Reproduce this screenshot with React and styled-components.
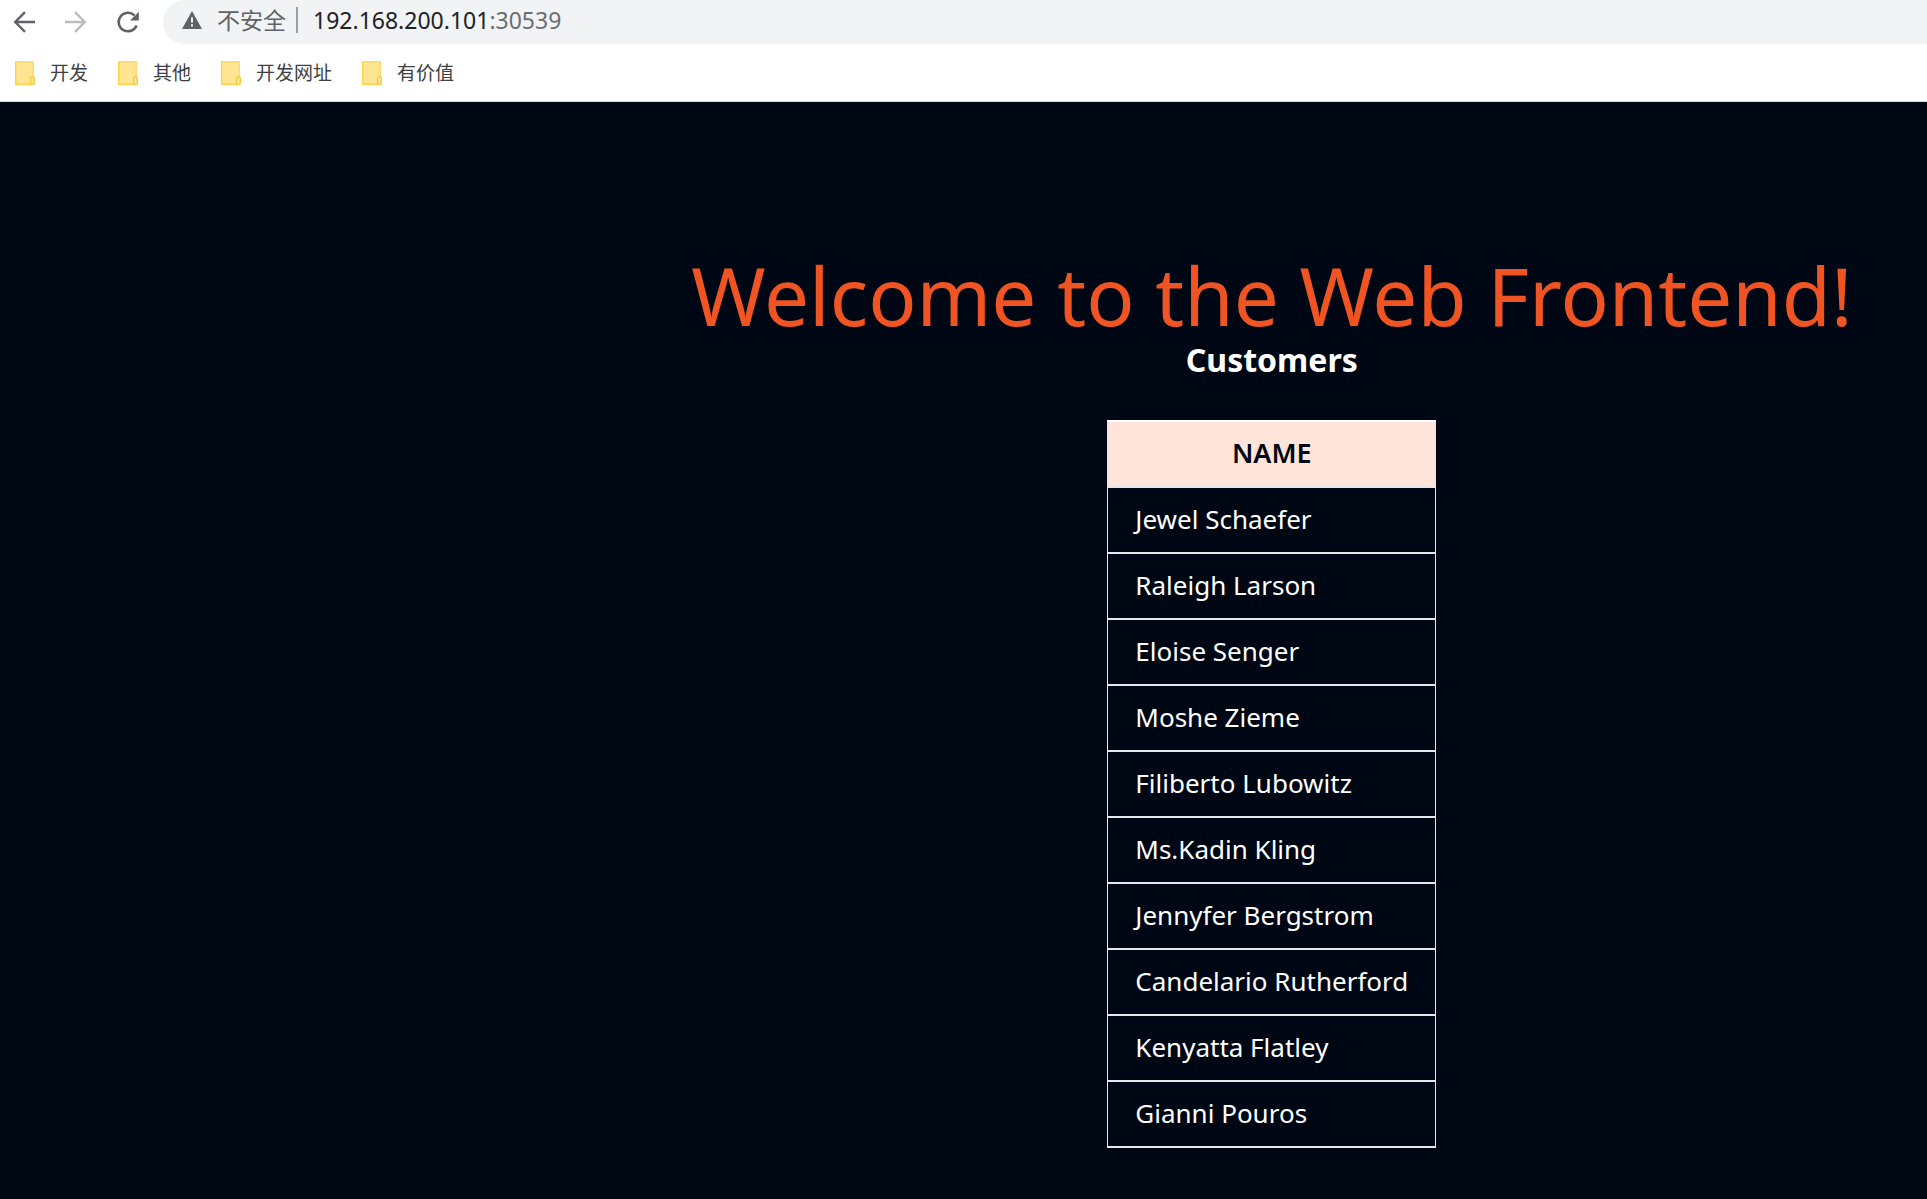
import React from "react";
import styled, { createGlobalStyle } from "styled-components";

const GlobalStyle = createGlobalStyle`
  * { box-sizing: border-box; }
  body {
    margin: 0;
    background: #000714;
    font-family: "Noto Sans", "Noto Sans CJK SC", sans-serif;
  }
  button { border: 0; padding: 0; background: none; font: inherit; color: inherit; cursor: pointer; }
`;

const Page = styled.div`
  display: flex;
  flex-direction: column;
  min-height: 100vh;
`;

const Browser = styled.header`
  background: #fff;
  border-bottom: 1px solid #dadce0;
`;

const Toolbar = styled.div`
  display: flex;
  align-items: center;
  height: 44px;
  padding-left: 12px;
`;

const NavButtons = styled.div`
  display: flex;
  gap: 28px;
  height: 40px;
  margin-right: 23px;
`;

const NavButton = styled.button`
  display: flex;
  align-items: center;
  color: ${(p) => (p.disabled ? "#babcbe" : "#5f6368")};
`;

const AddressBar = styled.div`
  display: flex;
  align-items: center;
  flex: 1;
  height: 44px;
  padding: 0 0 4px 19px;
  border-radius: 22px 0 0 22px;
  background: #f1f3f4;
  font-size: 23px;
  line-height: 32px;
`;

const SecurityButton = styled.button`
  display: flex;
  align-items: center;
  gap: 15px;
  color: #5f6368;
`;

const Divider = styled.span`
  width: 2px;
  height: 26px;
  margin: 0 15px 0 10px;
  background: #9b9da0;
`;

const Address = styled.span`
  color: #202124;
`;

const Port = styled.span`
  color: #6b6e72;
`;

const Bookmarks = styled.nav`
  display: flex;
  align-items: center;
  gap: 30px;
  height: 57px;
  padding: 0 15px;
`;

const Bookmark = styled.button`
  display: flex;
  align-items: center;
  gap: 15px;
  color: #3c4043;
  font-size: 19px;
  line-height: 28px;
`;

const Main = styled.main`
  display: flex;
  flex-direction: column;
  align-items: center;
  padding: 147px 0 51px 32%;
  color: #fff;
`;

const Title = styled.h1`
  margin: 0;
  color: #f05423;
  font-size: 80px;
  font-weight: 400;
  line-height: 92px;
  white-space: nowrap;
`;

const Subtitle = styled.h2`
  margin: 0 0 41px;
  font-size: 32px;
  font-weight: 700;
  line-height: 38px;
`;

const Table = styled.table`
  border-collapse: collapse;
  border: 1px solid #e5e7eb;
  font-size: 26px;
  line-height: 38px;
`;

const HeadCell = styled.th`
  height: 66px;
  padding: 12px 27px 14px;
  border-top: 2px solid #fff;
  background: #ffe4d9;
  color: #000714;
  font-size: 27px;
  font-weight: 600;
  text-align: center;
`;

const Cell = styled.td`
  height: 66px;
  padding: 12px 27px 14px;
  border-top: 2px solid #e5e7eb;
  border-bottom: 2px solid #e5e7eb;
  white-space: nowrap;
`;

const BackIcon = () => (
  <svg width="24" height="24" viewBox="0 0 24 24" fill="none" stroke="currentColor" strokeWidth="2.4">
    <path d="M23 12H4M13 2.2 3.2 12l9.8 9.8" />
  </svg>
);

const ForwardIcon = () => (
  <svg width="24" height="24" viewBox="0 0 24 24" fill="none" stroke="currentColor" strokeWidth="2.4">
    <path d="M1 12h19M11 2.2l9.8 9.8-9.8 9.8" />
  </svg>
);

const ReloadIcon = () => (
  <svg width="24" height="24" viewBox="0 0 24 24">
    <path d="M20.6 15.5A9.3 9.3 0 1 1 18.5 5.4" fill="none" stroke="currentColor" strokeWidth="2.5" />
    <path d="M22.8 1.8v8.8H14z" fill="currentColor" />
  </svg>
);

const WarningIcon = () => (
  <svg width="20" height="18" viewBox="0 0 20 18">
    <path d="M10 0 20 18H0z" fill="#5f6368" />
    <path d="M9 6.5h2v5H9zM9 13.2h2v2.2H9z" fill="#f1f3f4" />
  </svg>
);

const FolderIcon = () => (
  <svg width="20" height="24" viewBox="0 0 20 24">
    <path d="M.7.7h17.6v22.6H.7z" fill="#ffe592" stroke="#fadb6b" strokeWidth="1.4" />
    <path d="M.7 1v22.3h15" fill="none" stroke="#f9d44b" strokeWidth="1.2" />
    <rect x="15.6" y="15.8" width="3.8" height="7.5" rx="1.4" fill="#ffe592" stroke="#f2c83a" strokeWidth="1.2" />
  </svg>
);

const bookmarks = ["开发", "其他", "开发网址", "有价值"];

const customers = [
  "Jewel Schaefer",
  "Raleigh Larson",
  "Eloise Senger",
  "Moshe Zieme",
  "Filiberto Lubowitz",
  "Ms.Kadin Kling",
  "Jennyfer Bergstrom",
  "Candelario Rutherford",
  "Kenyatta Flatley",
  "Gianni Pouros",
];

export default function App() {
  return (
    <Page>
      <GlobalStyle />
      <Browser>
        <Toolbar>
          <NavButtons>
            <NavButton aria-label="后退"><BackIcon /></NavButton>
            <NavButton aria-label="前进" disabled><ForwardIcon /></NavButton>
            <NavButton aria-label="重新加载"><ReloadIcon /></NavButton>
          </NavButtons>
          <AddressBar>
            <SecurityButton><WarningIcon />不安全</SecurityButton>
            <Divider />
            <Address>192.168.200.101<Port>:30539</Port></Address>
          </AddressBar>
        </Toolbar>
        <Bookmarks>
          {bookmarks.map((name) => (
            <Bookmark key={name}><FolderIcon />{name}</Bookmark>
          ))}
        </Bookmarks>
      </Browser>
      <Main>
        <Title>Welcome to the Web Frontend!</Title>
        <Subtitle>Customers</Subtitle>
        <Table>
          <thead>
            <tr><HeadCell scope="col">NAME</HeadCell></tr>
          </thead>
          <tbody>
            {customers.map((name) => (
              <tr key={name}><Cell>{name}</Cell></tr>
            ))}
          </tbody>
        </Table>
      </Main>
    </Page>
  );
}
